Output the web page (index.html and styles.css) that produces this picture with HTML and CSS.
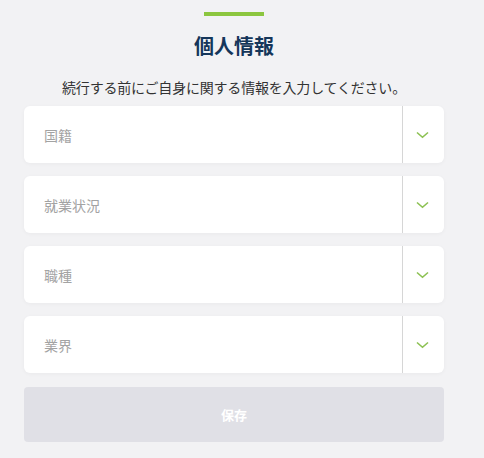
FILE: index.html
```html
<!DOCTYPE html>
<html lang="ja">
<head>
<meta charset="utf-8">
<link rel="stylesheet" href="styles.css">
</head>
<body>
<main class="page">
  <div class="accent"></div>
  <h1 class="title">個人情報</h1>
  <p class="lead">続行する前にご自身に関する情報を入力してください。</p>
  <form class="form">
    <div class="select">
      <span class="placeholder">国籍</span>
      <span class="toggle"><svg width="13" height="8" viewBox="0 0 13 8"><path d="M1 1.5 L6.5 6.3 L12 1.5" fill="none" stroke="#8cc152" stroke-width="1.6"/></svg></span>
    </div>
    <div class="select">
      <span class="placeholder">就業状況</span>
      <span class="toggle"><svg width="13" height="8" viewBox="0 0 13 8"><path d="M1 1.5 L6.5 6.3 L12 1.5" fill="none" stroke="#8cc152" stroke-width="1.6"/></svg></span>
    </div>
    <div class="select">
      <span class="placeholder">職種</span>
      <span class="toggle"><svg width="13" height="8" viewBox="0 0 13 8"><path d="M1 1.5 L6.5 6.3 L12 1.5" fill="none" stroke="#8cc152" stroke-width="1.6"/></svg></span>
    </div>
    <div class="select">
      <span class="placeholder">業界</span>
      <span class="toggle"><svg width="13" height="8" viewBox="0 0 13 8"><path d="M1 1.5 L6.5 6.3 L12 1.5" fill="none" stroke="#8cc152" stroke-width="1.6"/></svg></span>
    </div>
    <button type="button" class="save">保存</button>
  </form>
</main>
</body>
</html>
```
FILE: styles.css
```css
html, body {
  margin: 0;
  padding: 0;
  background: #f2f2f4;
}
body {
  font-family: "Noto Sans CJK JP", "Noto Sans", sans-serif;
}
.page {
  width: 420px;
  margin-left: 24px;
  padding-top: 12px;
  display: flex;
  flex-direction: column;
  align-items: center;
}
.accent {
  width: 60px;
  height: 4px;
  background: #8cc63f;
}
.title {
  margin: 16px 0 0;
  font-size: 20px;
  line-height: 28px;
  font-weight: 700;
  color: #15365a;
}
.lead {
  margin: 17px 0 0;
  font-size: 14px;
  line-height: 20px;
  color: #333333;
  letter-spacing: -0.2px;
}
.form {
  margin-top: 9px;
  width: 100%;
  display: flex;
  flex-direction: column;
  gap: 13px;
}
.select {
  height: 57px;
  background: #ffffff;
  border-radius: 6px;
  box-shadow: 0 1px 4px rgba(0,0,0,0.04);
  display: flex;
  align-items: stretch;
}
.placeholder {
  flex: 1;
  display: flex;
  align-items: center;
  padding-left: 20px;
  font-size: 14px;
  color: #a3a3a3;
}
.toggle {
  width: 41px;
  border-left: 1px solid #d6d6d6;
  display: flex;
  align-items: center;
  justify-content: center;
}
.toggle svg {
  display: block;
  margin-right: 2px;
}
.save {
  margin-top: 1px;
  height: 55px;
  border: none;
  border-radius: 4px;
  background: #e0e0e6;
  color: #ffffff;
  font-family: "Noto Sans CJK JP", sans-serif;
  font-size: 13px;
  font-weight: 700;
}
```
